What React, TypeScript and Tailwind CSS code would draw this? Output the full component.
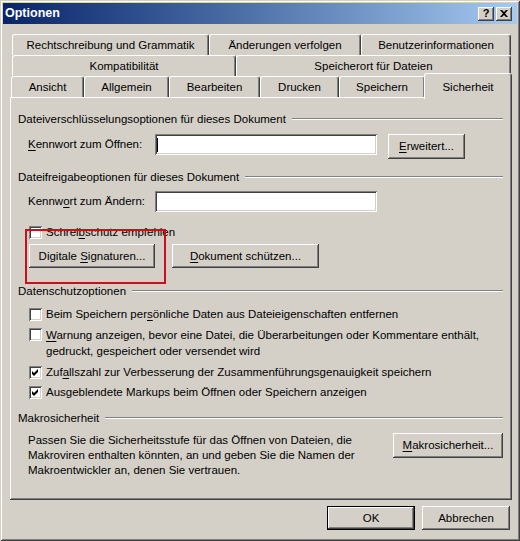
import React from 'react';

// Windows classic bevels
const raised =
  'shadow-[inset_-1px_-1px_#404040,inset_1px_1px_#ffffff,inset_-2px_-2px_#808080,inset_2px_2px_#d4d0c8]';
const sunken =
  'shadow-[inset_1px_1px_#808080,inset_-1px_-1px_#ffffff,inset_2px_2px_#404040,inset_-2px_-2px_#d4d0c8]';

const U = ({ children }: { children: React.ReactNode }) => <span className="underline underline-offset-2">{children}</span>;

const Btn = ({ w, children, isDefault }: { w: string; children: React.ReactNode; isDefault?: boolean }) => (
  <div
    className={`${w} h-full flex items-center justify-center bg-[#d4d0c8] ${
      isDefault
        ? 'border border-black shadow-[inset_-1px_-1px_#404040,inset_1px_1px_#ffffff,inset_-2px_-2px_#808080]'
        : raised
    }`}
  >
    {children}
  </div>
);

const CheckBox = ({ checked }: { checked?: boolean }) => (
  <div className={`w-[13px] h-[13px] shrink-0 bg-white flex items-center justify-center ${sunken}`}>
    {checked && (
      <svg width="7" height="7" viewBox="0 0 7 7">
        <path d="M0 2 L2 4 L6 0 L6 3 L2 7 L0 5 Z" fill="#000" />
      </svg>
    )}
  </div>
);

const GroupHeader = ({ label, mt }: { label: string; mt: string }) => (
  <div className={`${mt} h-[14px] flex items-center`}>
    <span className="whitespace-nowrap">{label}</span>
    <div className="flex-1 ml-[6px] h-[2px] border-t border-t-[#808080] border-b border-b-white" />
  </div>
);

const Tab = ({ w, label }: { w: string; label: string }) => (
  <div
    className={`${w} h-full flex items-center justify-center bg-[#d4d0c8] rounded-t-[3px] border-t border-l border-white border-r border-r-[#404040] shadow-[inset_-1px_0_#808080] whitespace-nowrap`}
  >
    {label}
  </div>
);

export default function App() {
  return (
    <div
      className="relative w-[520px] h-[541px] bg-[#d4d0c8] p-[3px] flex flex-col text-[11.5px] leading-[15px] text-black font-['Liberation_Sans',Arial,sans-serif] shadow-[inset_1px_1px_#d4d0c8,inset_-1px_-1px_#404040,inset_2px_2px_#ffffff,inset_-2px_-2px_#808080] overflow-hidden"
    >
      {/* title bar */}
      <div className="h-[21px] shrink-0 flex items-center bg-gradient-to-r from-[#0a246a] to-[#a6caf0] pl-[2px] pr-[5px]">
        <span className="text-white font-bold text-[12.5px]">Optionen</span>
        <div className="ml-auto flex gap-[2px] h-[14px]">
          <div className={`w-[16px] h-[14px] bg-[#d4d0c8] flex items-center justify-center font-bold text-[11px] leading-none ${raised}`}>
            ?
          </div>
          <div className={`w-[16px] h-[14px] bg-[#d4d0c8] flex items-center justify-center ${raised}`}>
            <svg width="8" height="7" viewBox="0 0 8 7">
              <path d="M0 0 L2 0 L4 2 L6 0 L8 0 L5 3.5 L8 7 L6 7 L4 5 L2 7 L0 7 L3 3.5 Z" fill="#000" />
            </svg>
          </div>
        </div>
      </div>

      {/* tabs */}
      <div className="mt-[10px] ml-[9px] flex flex-col">
        <div className="h-[21px] flex">
          <Tab w="w-[197px]" label="Rechtschreibung und Grammatik" />
          <Tab w="w-[152px]" label="Änderungen verfolgen" />
          <Tab w="w-[150px]" label="Benutzerinformationen" />
        </div>
        <div className="h-[21px] flex">
          <Tab w="w-[224px]" label="Kompatibilität" />
          <Tab w="w-[275px]" label="Speicherort für Dateien" />
        </div>
        <div className="h-[21px] flex -ml-[1px]">
          <Tab w="w-[73px]" label="Ansicht" />
          <Tab w="w-[85px]" label="Allgemein" />
          <Tab w="w-[91px]" label="Bearbeiten" />
          <Tab w="w-[79px]" label="Drucken" />
          <Tab w="w-[86px]" label="Speichern" />
          <div className="relative z-10 top-[2px] self-end h-[26px] w-[88px] -ml-[1px] flex items-start justify-center pt-[6px] bg-[#d4d0c8] rounded-t-[3px] border-t border-l border-white border-r border-r-[#404040] shadow-[inset_-1px_0_#808080]">
            Sicherheit
          </div>
        </div>
      </div>

      {/* panel */}
      <div className={`ml-[7px] w-[502px] h-[403px] shrink-0 flex flex-col pl-[8px] pr-[9px] ${raised}`}>
        <GroupHeader label="Dateiverschlüsselungsoptionen für dieses Dokument" mt="mt-[15px]" />
        <div className="mt-[8px] h-[25px] flex ml-[10px]">
          <div className="w-[127px] h-[21px] flex items-center">
            <span><U>K</U>ennwort zum Öffnen:</span>
          </div>
          <div className={`w-[222px] h-[21px] bg-white flex items-center pl-[2px] ${sunken}`}>
            <div className="w-[1px] h-[14px] bg-black" />
          </div>
          <div className="ml-[11px] h-[25px]">
            <Btn w="w-[77px]"><span><U>E</U>rweitert...</span></Btn>
          </div>
        </div>

        <GroupHeader label="Dateifreigabeoptionen für dieses Dokument" mt="mt-[11px]" />
        <div className="mt-[7px] h-[21px] flex ml-[10px]">
          <div className="w-[127px] h-[21px] flex items-center">
            <span>Kennw<U>o</U>rt zum Ändern:</span>
          </div>
          <div className={`w-[222px] h-[21px] bg-white ${sunken}`} />
        </div>
        <div className="mt-[13px] h-[14px] flex items-center gap-[4px] ml-[11px]">
          <CheckBox />
          <span>Schrei<U>b</U>schutz empfehlen</span>
        </div>
        <div className="mt-[5px] h-[24px] flex ml-[11px] gap-[17px]">
          <Btn w="w-[126px]"><span>Digitale <U>S</U>ignaturen...</span></Btn>
          <Btn w="w-[147px]"><span><U>D</U>okument schützen...</span></Btn>
        </div>

        <GroupHeader label="Datenschutzoptionen" mt="mt-[16px]" />
        <div className="mt-[9px] h-[14px] flex items-center gap-[4px] ml-[11px]">
          <CheckBox />
          <span>Beim Speichern per<U>s</U>önliche Daten aus Dateieigenschaften entfernen</span>
        </div>
        <div className="mt-[6px] h-[32px] flex items-start gap-[4px] ml-[11px] leading-[16px]">
          <div className="mt-[1px]"><CheckBox /></div>
          <span>
            <U>W</U>arnung anzeigen, bevor eine Datei, die Überarbeitungen oder Kommentare enthält,
            <br />
            gedruckt, gespeichert oder versendet wird
          </span>
        </div>
        <div className="mt-[6px] h-[14px] flex items-center gap-[4px] ml-[11px]">
          <CheckBox checked />
          <span>Zuf<U>a</U>llszahl zur Verbesserung der Zusammenführungsgenauigkeit speichern</span>
        </div>
        <div className="mt-[6px] h-[14px] flex items-center gap-[4px] ml-[11px]">
          <CheckBox checked />
          <span>Ausgeblendete Markups beim Öffnen oder Speichern anzeigen</span>
        </div>

        <GroupHeader label="Makrosicherheit" mt="mt-[12px]" />
        <div className="mt-[8px] flex ml-[10px]">
          <p className="leading-[15px]">
            Passen Sie die Sicherheitsstufe für das Öffnen von Dateien, die
            <br />
            Makroviren enthalten könnten, an und geben Sie die Namen der
            <br />
            Makroentwickler an, denen Sie vertrauen.
          </p>
          <div className="ml-auto h-[25px]">
            <Btn w="w-[110px]"><span><U>M</U>akrosicherheit...</span></Btn>
          </div>
        </div>
      </div>

      {/* dialog buttons */}
      <div className="mt-[6px] h-[24px] flex justify-end gap-[7px] pr-[7px]">
        <Btn w="w-[88px]" isDefault>OK</Btn>
        <Btn w="w-[88px]">Abbrechen</Btn>
      </div>

      {/* red annotation frame */}
      <div className="absolute left-[25px] top-[229px] w-[141px] h-[55px] border-2 border-[#c8101a] pointer-events-none" />
    </div>
  );
}
